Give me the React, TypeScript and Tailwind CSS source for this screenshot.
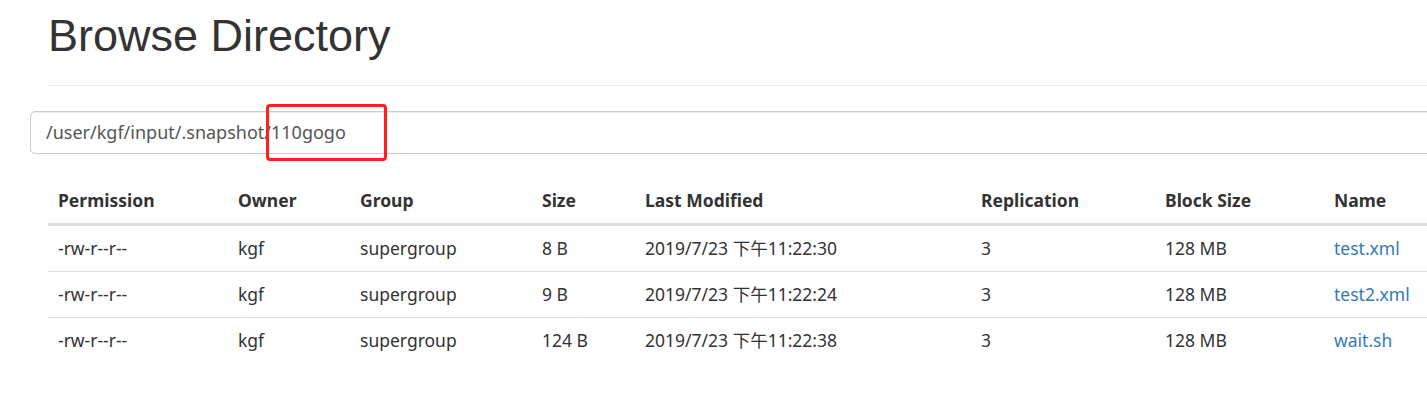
import React from 'react';

const columns = [
  { label: 'Permission', width: 'w-[180px]' },
  { label: 'Owner', width: 'w-[122px]' },
  { label: 'Group', width: 'w-[182px]' },
  { label: 'Size', width: 'w-[103px]' },
  { label: 'Last Modified', width: 'w-[336px]' },
  { label: 'Replication', width: 'w-[184px]' },
  { label: 'Block Size', width: 'w-[169px]' },
  { label: 'Name', width: 'w-[140px]' },
];

const files = [
  { perm: '-rw-r--r--', owner: 'kgf', group: 'supergroup', size: '8 B', modified: '2019/7/23 下午11:22:30', repl: '3', block: '128 MB', name: 'test.xml' },
  { perm: '-rw-r--r--', owner: 'kgf', group: 'supergroup', size: '9 B', modified: '2019/7/23 下午11:22:24', repl: '3', block: '128 MB', name: 'test2.xml' },
  { perm: '-rw-r--r--', owner: 'kgf', group: 'supergroup', size: '124 B', modified: '2019/7/23 下午11:22:38', repl: '3', block: '128 MB', name: 'wait.sh' },
];

const bodyFont = { fontFamily: '"Noto Sans", "Noto Sans CJK SC", sans-serif' };

export default function App() {
  return (
    <div className="relative h-[401px] w-full overflow-hidden bg-white text-[#333]" style={bodyFont}>
      <div className="ml-[48px] border-b border-[#eee] pt-[11px] pb-[24px]">
        <h1
          className="text-[45px] leading-[50px] font-normal text-[#333]"
          style={{ fontFamily: '"Liberation Sans", Arial, sans-serif' }}
        >
          Browse Directory
        </h1>
      </div>

      <div className="relative mt-[25px] ml-[30px]">
        <div className="flex h-[43px] w-[1450px] items-center rounded-[5px] border border-[#ccc] bg-white pl-[15px] text-[18px] text-[#555] shadow-[inset_0_1px_1px_rgba(0,0,0,0.075)]">
          /user/kgf/input/.snapshot/110gogo
        </div>
        <div className="absolute left-[236px] top-[-7px] h-[57px] w-[121px] rounded-[4px] border-[3px] border-[#ff1f1f]" />
      </div>

      <table className="mt-[24px] ml-[48px] w-[1416px] table-fixed border-collapse text-[17.5px] leading-[25px]">
        <colgroup>
          {columns.map((c) => (
            <col key={c.label} className={c.width} />
          ))}
        </colgroup>
        <thead>
          <tr>
            {columns.map((c) => (
              <th key={c.label} className="border-b-[3px] border-[#ddd] px-[10px] py-[10px] text-left font-bold">
                {c.label}
              </th>
            ))}
          </tr>
        </thead>
        <tbody>
          {files.map((f, i) => (
            <tr key={f.name} className={i > 0 ? 'border-t border-[#ddd]' : ''}>
              <td className="px-[10px] py-[10px]">{f.perm}</td>
              <td className="px-[10px] py-[10px]">{f.owner}</td>
              <td className="px-[10px] py-[10px]">{f.group}</td>
              <td className="px-[10px] py-[10px]">{f.size}</td>
              <td className="px-[10px] py-[10px]">{f.modified}</td>
              <td className="px-[10px] py-[10px]">{f.repl}</td>
              <td className="px-[10px] py-[10px]">{f.block}</td>
              <td className="px-[10px] py-[10px]">
                <a href="#" className="text-[#337ab7]">{f.name}</a>
              </td>
            </tr>
          ))}
        </tbody>
      </table>
    </div>
  );
}
